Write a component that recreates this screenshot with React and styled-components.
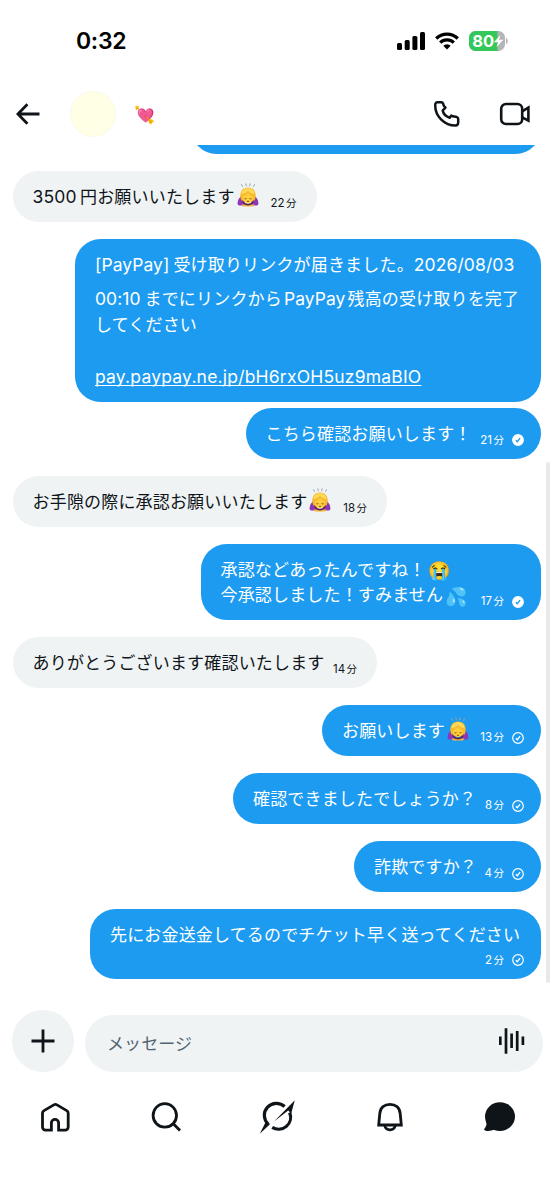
import styled, { createGlobalStyle } from "styled-components";

export default function App() {
  return (
    <Screen>
      <GlobalStyle />
      <StatusBar>
        <Clock>0:32</Clock>
        <StatusIcons>
          <SignalIcon />
          <WifiIcon />
          <BatteryIcon />
        </StatusIcons>
      </StatusBar>

      <Header>
        <BackIcon />
        <Avatar />
        <NameEmoji>💘</NameEmoji>
        <HeaderActions>
          <PhoneIcon />
          <VideoIcon />
        </HeaderActions>
      </Header>

      <ChatArea>
        <MessageList>
          <Bubble $mine $width={350} $cut />
          <Bubble $width={304} $gap={17}>
            <Text>
              <Latin $after={3.5} $spacing={0.1}>3500</Latin>円お願いいたします<BowEmoji />
            </Text>
            <Meta time="22" />
          </Bubble>
          <Bubble $mine $width={466} $gap={17} $height={163}>
            <Text>
              <FirstLine>
                <Latin $after={4}>[PayPay]</Latin>受け取りリンクが届きました。<Latin $spacing={0.1}>2026/08/03</Latin>
              </FirstLine>
              <Latin $after={4}>00:10</Latin>までにリンクから<Latin $before={2} $after={2}>PayPay</Latin>残高の受け取りを完了
              <br />
              してください
              <br />
              <br />
              <MessageLink href="#">pay.paypay.ne.jp/bH6rxOH5uz9maBIO</MessageLink>
            </Text>
          </Bubble>
          <Bubble $mine $width={295.5} $gap={5.5}>
            <Text>こちら確認お願いします！</Text>
            <Meta time="21" status="read" />
          </Bubble>
          <Bubble $width={374.5} $gap={17}>
            <Text>
              お手隙の際に承認お願いいたします<BowEmoji />
            </Text>
            <Meta time="18" />
          </Bubble>
          <Bubble $mine $width={340.5} $gap={17} $height={76.5}>
            <Text>
              承認などあったんですね！<Emoji>😭</Emoji>
              <br />
              今承認しました！すみません<Emoji>💦</Emoji>
            </Text>
            <Meta time="17" status="read" />
          </Bubble>
          <Bubble $width={364.5} $gap={17}>
            <Text>ありがとうございます確認いたします</Text>
            <Meta time="14" />
          </Bubble>
          <Bubble $mine $width={219} $gap={17}>
            <Text>
              お願いします<BowEmoji />
            </Text>
            <Meta time="13" status="sent" />
          </Bubble>
          <Bubble $mine $width={308} $gap={17}>
            <Text>確認できましたでしょうか？</Text>
            <Meta time="8" status="sent" />
          </Bubble>
          <Bubble $mine $width={187} $gap={17}>
            <Text>詐欺ですか？</Text>
            <Meta time="4" status="sent" />
          </Bubble>
          <Bubble $mine $width={451} $gap={17} $height={69.5} $stacked>
            <Text>先にお金送金してるのでチケット早く送ってください</Text>
            <Meta time="2" status="sent" />
          </Bubble>
        </MessageList>
        <ScrollThumb />
      </ChatArea>

      <Composer>
        <AddButton aria-label="追加">
          <svg width="24" height="24" viewBox="0 0 24 24" stroke="#0f1419" strokeWidth="2.8">
            <path d="M12 .5v23M.5 12h23" />
          </svg>
        </AddButton>
        <MessageField>
          <span>メッセージ</span>
          <VoiceIcon />
        </MessageField>
      </Composer>

      <NavBar>
        <HomeIcon />
        <SearchIcon />
        <GrokIcon />
        <BellIcon />
        <MessagesIcon />
      </NavBar>
    </Screen>
  );
}

function Meta({ time, status }) {
  return (
    <MetaRow>
      <span>
        <b>{time}</b>分
      </span>
      {status && (
        <svg width="12" height="12" viewBox="0 0 12 12" fill="none">
          <circle
            cx="6"
            cy="6"
            r="5.3"
            fill={status === "read" ? "#fff" : "none"}
            stroke="#fff"
            strokeWidth="1.2"
          />
          <path
            d="M3.8 6.2l1.5 1.5 2.8-3.5"
            stroke={status === "read" ? "#1d9bf0" : "#fff"}
            strokeWidth="1.3"
          />
        </svg>
      )}
    </MetaRow>
  );
}

const BowEmoji = () => (
  <Emoji $lift={3} role="img" aria-label="お辞儀">
    <svg width="22" height="24" viewBox="0 0 22 24">
      <g stroke="#9aa3ac" strokeWidth="1" strokeLinecap="round">
        <path d="M4.500 1.600l1 1.800M8.900.8l.3 2M13.100.8l-.3 2M17.500 1.600l-1 1.800" />
      </g>
      <path d="M4.500 13C2 14.500.6 17.500.6 20.500c0 1.500 1 2 2.500 2h4.700V15z" fill="#8e35b8" />
      <path d="M17.500 13c2.500 1.500 3.900 4.500 3.900 7.500 0 1.500-1 2-2.500 2h-4.700V15z" fill="#8e35b8" />
      <path d="M4.500 21.500h13l-1.500 2H6z" fill="#f6b73c" />
      <path d="M11 4.500c-5 0-7.700 3.600-7.700 8 0 2.600.7 4.600 2 6h11.400c1.300-1.400 2-3.400 2-6 0-4.400-2.700-8-7.700-8z" fill="#f5b92e" />
      <path d="M11 5.200c-4 0-6.500 2.700-6.500 6 2.800-.3 5-1.500 6.500-3.400 1.500 1.900 3.700 3.100 6.500 3.400 0-3.300-2.500-6-6.500-6z" fill="#ffd95a" />
      <path d="M5.800 13.500c2.200-.8 4-2 5.200-3.700 1.200 1.700 3 2.900 5.200 3.700 0 4-2.200 6.500-5.200 6.500s-5.200-2.500-5.200-6.500z" fill="#ffce3d" />
      <path d="M5.200 16.800c1.400 2.800 3.300 3.900 5.800 3.900s4.400-1.100 5.800-3.900c.2 3.500-2.300 5.600-5.800 5.600s-6-2.100-5.800-5.600z" fill="#5d2348" />
      <path d="M7.500 15.500c.5.600 1.400.6 1.900 0M12.600 15.500c.5.600 1.400.6 1.900 0M10 18.300h2" stroke="#6b3c12" strokeWidth=".9" fill="none" />
    </svg>
  </Emoji>
);

const SignalIcon = () => (
  <svg width="28" height="18" viewBox="0 0 28 18">
    <rect x="0" y="11" width="5" height="7" rx="1.5" />
    <rect x="7.7" y="8" width="5" height="10" rx="1.5" />
    <rect x="15.4" y="4" width="5" height="14" rx="1.5" />
    <rect x="23" y="0" width="5" height="18" rx="1.5" />
  </svg>
);

const WifiIcon = () => (
  <svg width="24" height="18" viewBox="0 0 24 18" fill="none" stroke="#000" strokeWidth="3.2">
    <path d="M1.2 6.5a15.4 15.4 0 0 1 21.6 0" />
    <path d="M5.2 10.7a9.7 9.7 0 0 1 13.6 0" />
    <path d="M12 17.4l-3.7-3.7a5.3 5.3 0 0 1 7.4 0z" fill="#000" stroke="none" />
  </svg>
);

const BatteryIcon = () => (
  <svg width="39" height="20" viewBox="0 0 39 20">
    <defs>
      <clipPath id="battery">
        <rect width="36" height="20" rx="6.5" />
      </clipPath>
    </defs>
    <g clipPath="url(#battery)">
      <rect width="36" height="20" fill="#b5b5b7" />
      <rect width="28.5" height="20" fill="#34c759" />
    </g>
    <path d="M37 6.8c2.3 1 2.3 5.400 0 6.400z" fill="#b5b5b7" />
    <text x="3.200" y="16" fontFamily="Inter, sans-serif" fontSize="16.500" fontWeight="700" fill="#fff">
      80
    </text>
    <path d="M31.500 4l-6.700 7.200h4.200L27.500 16.200l6.800-7.400H30z" fill="#fff" />
  </svg>
);

const BackIcon = () => (
  <svg width="24" height="22" viewBox="0 0 24 22" fill="none" stroke="#0f1419" strokeWidth="2.8">
    <path d="M11.400 1.300L1.900 11l9.500 9.700M2 11h21.500" />
  </svg>
);

const PhoneIcon = () => (
  <svg width="28" height="28" viewBox="0 0 28 28" fill="none" stroke="#0f1419" strokeWidth="2.5" strokeLinejoin="round">
    <path d="M4.600 2.300H8.400C9.200 2.300 9.700 2.700 10 3.400L11 6.200L12.500 7.600L9.700 10.500C10.300 13.600 13.200 16.600 16.700 17.700L18.300 15.500L19.800 16.300L23.800 17.100C24.800 17.400 25.200 18 25.200 18.900V22.600C25.200 24.700 24.300 25.500 22.600 25.500C11.500 25.500 2.200 16.500 2.200 5.200C2.200 3.400 3 2.300 4.600 2.300Z" />
  </svg>
);

const VideoIcon = () => (
  <svg width="32" height="24" viewBox="0 0 32 24" fill="none" stroke="#0f1419" strokeWidth="2.6">
    <rect x="2.200" y="2" width="21" height="20" rx="4.800" />
    <path d="M23.200 9.300l6.200-3.700v13l-6.200-3.300" />
  </svg>
);

const VoiceIcon = () => (
  <svg width="26" height="26" viewBox="0 0 26 26" stroke="#0f1419" strokeWidth="2.7">
    <path d="M1.300 8.500v8.500M7 .3v25.400M12.600 5.500v14.500M18.200 3v20M23.900 8.500v8.500" />
  </svg>
);

const HomeIcon = () => (
  <NavIcon>
    <path d="M8.500 31.100H14.400V24a3.600 3.600 0 0 1 7.200 0V31.100H28.200a3 3 0 0 0 3-3V14.200a3 3 0 0 0-1.500-2.600L20 5.900a3 3 0 0 0-3.200 0L7 11.600a3 3 0 0 0-1.500 2.600V28.100a3 3 0 0 0 3 3z" />
  </NavIcon>
);

const SearchIcon = () => (
  <NavIcon>
    <circle cx="16.800" cy="16.400" r="11.700" />
    <path d="M25 24.600l7 7" />
  </NavIcon>
);

const GrokIcon = () => (
  <NavIcon>
    <path d="M25.600 7.500A12 12 0 0 0 9.200 25.200" strokeWidth="3.200" />
    <path d="M6.700 23L.8 34.800 11.200 24.900z" fill="#0f1419" stroke="none" />
    <path d="M30.600 13.500A12 12 0 0 1 13.200 28.400" strokeWidth="3.200" />
    <path d="M15 22.500L35.800 1.300 32.200 14.500 29.200 11.500z" fill="#0f1419" stroke="none" />
  </NavIcon>
);

const BellIcon = () => (
  <NavIcon>
    <path d="M8.700 26l1.100-11.500C10.400 8.500 14.500 5.300 20 5.300s9.600 3.200 10.200 9.200L31.300 26z" />
    <path d="M14.700 26.500c.6 2.700 2.600 4.300 5.300 4.300s4.700-1.600 5.300-4.300" />
  </NavIcon>
);

const MessagesIcon = () => (
  <NavIcon>
    <g fill="#0f1419" stroke="none">
      <ellipse cx="19" cy="17.600" rx="15" ry="14.400" />
      <path d="M4.600 21c1.300 3.500 1.500 5.500-1.600 9.200.2 2.300 6.600 2.200 10.600.4z" />
    </g>
  </NavIcon>
);

const GlobalStyle = createGlobalStyle`
  * {
    box-sizing: border-box;
  }
  body {
    margin: 0;
    background: #fff;
    color: #0f1419;
    font-family: Inter, "Noto Sans CJK JP", sans-serif;
  }
  svg {
    display: block;
    flex-shrink: 0;
  }
`;

const Screen = styled.div`
  width: 554px;
  height: 1200px;
  display: flex;
  flex-direction: column;
  overflow: hidden;
`;

const StatusBar = styled.div`
  height: 82px;
  padding: 0 46px 0 76px;
  display: flex;
  align-items: center;
  justify-content: space-between;
  color: #000;
`;

const Clock = styled.span`
  font-size: 23px;
  font-weight: 600;
  letter-spacing: -0.3px;
`;

const StatusIcons = styled.div`
  display: flex;
  align-items: center;
  gap: 10px;
`;

const Header = styled.header`
  height: 63px;
  padding: 0 23px 0 16px;
  display: flex;
  align-items: center;
`;

const Avatar = styled.div`
  width: 46px;
  height: 46px;
  margin-left: 30px;
  border: 1px solid #fafae8;
  border-radius: 50%;
  background: #ffffe6;
`;

const NameEmoji = styled.span`
  margin-left: 18px;
  padding-top: 2px;
  font-size: 17px;
  line-height: 24px;
`;

const HeaderActions = styled.div`
  margin-left: auto;
  display: flex;
  align-items: center;
  gap: 38px;
`;

const ChatArea = styled.main`
  height: 855px;
  display: flex;
  overflow: hidden;
`;

const MessageList = styled.div`
  width: 541px;
  padding-left: 12.600px;
  display: flex;
  flex-direction: column;
  align-items: flex-start;
`;

const Bubble = styled.div`
  width: ${(props) => props.$width}px;
  height: ${(props) => props.$height || 51}px;
  margin-top: ${(props) => (props.$cut ? -41.8 : props.$gap)}px;
  padding: ${(props) => (props.$mine ? "13px 17px 12px 20px" : "13px 20px 12px")};
  align-self: ${(props) => (props.$mine ? "flex-end" : "flex-start")};
  flex-shrink: 0;
  display: flex;
  flex-direction: ${(props) => (props.$stacked ? "column" : "row")};
  align-items: flex-end;
  justify-content: space-between;
  border-radius: 25.5px;
  background: ${(props) => (props.$mine ? "#1d9bf0" : "#eff3f4")};
  color: ${(props) => (props.$mine ? "#fff" : "#0f1419")};
`;

const Text = styled.div`
  align-self: flex-start;
  padding-top: 1px;
  font-size: 17px;
  line-height: 25.7px;
  letter-spacing: 0.17px;
  white-space: nowrap;
`;

const FirstLine = styled.div`
  margin-bottom: 8.500px;
`;

const Latin = styled.span`
  margin-left: ${(props) => props.$before || 0}px;
  margin-right: ${(props) => props.$after || 0}px;
  font-size: 17.500px;
  line-height: 1;
  letter-spacing: ${(props) => props.$spacing || 0.05}px;
`;

const MessageLink = styled.a`
  color: inherit;
  font-size: 17.500px;
  line-height: 1;
  letter-spacing: 0.2px;
  text-underline-offset: 2px;
  text-decoration-skip-ink: none;
`;

const Emoji = styled.span`
  display: inline-block;
  width: 22px;
  height: 22px;
  margin-top: ${(props) => -(props.$lift || 0) * 2}px;
  margin-bottom: ${(props) => props.$lift || 0}px;
  margin-left: 2px;
  font-size: 18px;
  line-height: 22px;
  vertical-align: middle;
`;

const MetaRow = styled.div`
  display: flex;
  align-items: center;
  gap: 8px;
  margin-bottom: -1px;
  font-size: 10.500px;
  line-height: 14px;
  white-space: nowrap;
  b {
    margin-right: 1.500px;
    font-size: 11.500px;
    font-weight: 400;
  }
`;

const ScrollThumb = styled.div`
  width: 4px;
  height: 521px;
  margin: 317px 0 0 5px;
  background: #e9e9ea;
  border-radius: 2px;
`;

const Composer = styled.div`
  height: 85px;
  padding: 10px 11.500px 0;
  display: flex;
  gap: 11.500px;
`;

const AddButton = styled.button`
  width: 62px;
  height: 62px;
  padding: 0;
  border: 0;
  border-radius: 50%;
  background: #eff3f4;
  display: flex;
  align-items: center;
  justify-content: center;
`;

const MessageField = styled.div`
  flex: 1;
  height: 57px;
  margin-top: 5px;
  padding: 0 18px 0 22px;
  display: flex;
  align-items: center;
  justify-content: space-between;
  border-radius: 29px;
  background: #eff3f4;
  color: #536471;
  font-size: 17px;
  letter-spacing: 0.1px;
  span {
    margin-bottom: 2px;
  }
  svg {
    margin-bottom: 5px;
  }
`;

const NavBar = styled.nav`
  padding-top: 14px;
  display: grid;
  grid-template-columns: repeat(5, 1fr);
  justify-items: center;
`;

const NavIcon = styled.svg.attrs({ viewBox: "0 0 36 36" })`
  width: 36px;
  height: 36px;
  fill: none;
  stroke: #0f1419;
  stroke-width: 2.8;
  overflow: visible;
`;
